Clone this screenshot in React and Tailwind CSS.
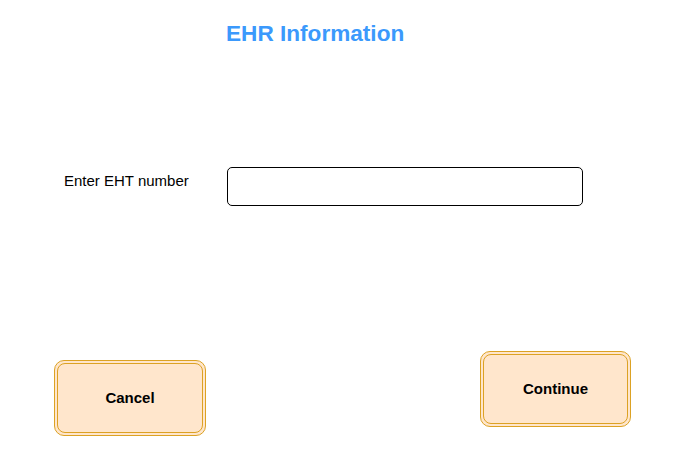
export default function App() {
  return (
    <div className="w-[677px] h-[472px] bg-white text-black" style={{ fontFamily: '"Liberation Sans", Arial, sans-serif' }}>
      <div className="pt-[21px] pl-[226px] text-[22.6px] font-bold leading-[26px] text-[#3b99fc]">EHR Information</div>

      <div className="mt-[120px] flex items-start">
        <div className="ml-[64px] mt-[5px] w-[163px] text-[15px] leading-[17px]">Enter EHT number</div>
        <input className="w-[356px] h-[39px] rounded-[5px] border border-black bg-white px-2 text-[14px] outline-none" type="text" />
      </div>

      <div className="mt-[145px] flex items-start">
        <button className="ml-[54px] mt-[9px] w-[152px] h-[76px] rounded-[10px] border-[1.5px] border-[#dca224] bg-[#ffe6cc] p-[2px]" type="button">
          <span className="flex h-full w-full items-center justify-center rounded-[8px] border-[1.5px] border-[#dca224] text-[15px] font-bold">Cancel</span>
        </button>
        <button className="ml-[274px] w-[151px] h-[76px] rounded-[10px] border-[1.5px] border-[#dca224] bg-[#ffe6cc] p-[2px]" type="button">
          <span className="flex h-full w-full items-center justify-center rounded-[8px] border-[1.5px] border-[#dca224] text-[15px] font-bold">Continue</span>
        </button>
      </div>
    </div>
  );
}
